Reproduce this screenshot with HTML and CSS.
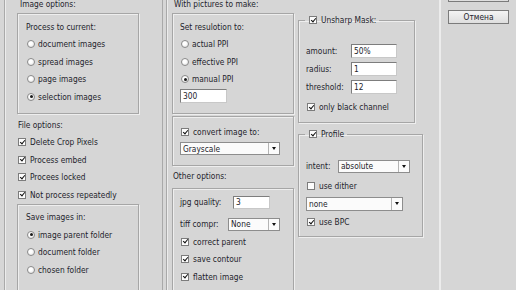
FILE: index.html
```html
<!DOCTYPE html>
<html lang="en">
<head>
    <meta charset="UTF-8">
    <title>Batch Image Options</title>
    <link rel="stylesheet" href="styles.css">
</head>
<body>

<div class="dialog">

    <!-- Image / file options -->
    <div class="col col-image">
        <div class="frame frame-image">
            <div class="head">Image options:</div>
            <div class="box box-top">
                <div class="row">Process to current:</div>
                <div class="row"><span class="radio"></span>document images</div>
                <div class="row"><span class="radio"></span>spread images</div>
                <div class="row"><span class="radio"></span>page images</div>
                <div class="row"><span class="radio on"></span>selection images</div>
            </div>
            <div class="row head2">File options:</div>
            <div class="row flat"><span class="check on"></span>Delete Crop Pixels</div>
            <div class="row flat"><span class="check on"></span>Process embed</div>
            <div class="row flat"><span class="check on"></span>Procees locked</div>
            <div class="row flat"><span class="check on"></span>Not process repeatedly</div>
            <div class="box box-save">
                <div class="row">Save images in:</div>
                <div class="row"><span class="radio on"></span>image parent folder</div>
                <div class="row"><span class="radio"></span>document folder</div>
                <div class="row"><span class="radio"></span>chosen folder</div>
            </div>
        </div>
    </div>

    <!-- Pictures to make -->
    <div class="col col-make">
        <div class="frame frame-make">
            <div class="head">With pictures to make:</div>
            <div class="box box-top">
                <div class="row">Set resulotion to:</div>
                <div class="row"><span class="radio"></span>actual PPI</div>
                <div class="row"><span class="radio"></span>effective PPI</div>
                <div class="row"><span class="radio on"></span>manual PPI</div>
                <div class="field field-ppi">300</div>
            </div>
            <div class="box box-convert">
                <div class="row short"><span class="check on"></span>convert image to:</div>
                <div class="select select-mode">Grayscale<span class="arrow"></span></div>
            </div>
            <div class="row head2 short">Other options:</div>
            <div class="box box-other">
                <div class="row tall"><span class="label">jpg quality:</span><span class="field field-jpg">3</span></div>
                <div class="row tall gap"><span class="label">tiff compr:</span><span class="select select-tiff">None<span class="arrow"></span></span></div>
                <div class="row"><span class="check on"></span>correct parent</div>
                <div class="row"><span class="check on"></span>save contour</div>
                <div class="row"><span class="check on"></span>flatten image</div>
                <div class="row"><span class="check on"></span></div>
            </div>
        </div>
    </div>

    <!-- Sharpen / colour profile -->
    <div class="col col-filter">
        <fieldset class="group group-sharp">
            <legend><span class="check on"></span>Unsharp Mask:</legend>
            <div class="row tall"><span class="label">amount:</span><span class="field field-num">50%</span></div>
            <div class="row tall"><span class="label">radius:</span><span class="field field-num">1</span></div>
            <div class="row tall"><span class="label">threshold:</span><span class="field field-num">12</span></div>
            <div class="row tall push"><span class="check on"></span>only black channel</div>
        </fieldset>
        <fieldset class="group group-profile">
            <legend><span class="check on"></span>Profile</legend>
            <div class="row tall"><span class="label label-intent">intent:</span><span class="select select-intent">absolute<span class="arrow"></span></span></div>
            <div class="row tall push"><span class="check"></span>use dither</div>
            <div class="row tall"><span class="select select-dither">none<span class="arrow"></span></span></div>
            <div class="row tall"><span class="check on"></span>use BPC</div>
        </fieldset>
    </div>

    <div class="divider"></div>

    <div class="col col-buttons">
        <div class="button button-ok"></div>
        <div class="button">Отмена</div>
    </div>

</div>

</body>
</html>
```

FILE: styles.css
```css
/* dialog look */
body {
    margin: 0;
    background-color: #d6d6d6;
    font-family: "DejaVu Sans Condensed", "DejaVu Sans", sans-serif;
    font-stretch: condensed;
    font-size: 8.3px;
    color: #1e1e2c;
    overflow: hidden;
}

.dialog {
    display: flex;
    align-items: flex-start;
    height: 290px;
    overflow: hidden;
}

.col {
    display: flex;
    flex-direction: column;
}

/* outer frames of the two left columns */
.frame {
    margin-top: -2px;
    height: 300px;
    border-left: 1px solid #a9a9a9;
    border-right: 1px solid #a9a9a9;
    box-shadow: inset 1px 0 0 #ececec;
}

.frame-image {
    margin-left: 4px;
    width: 145px;
    padding-left: 12px;
}

.frame-make {
    margin-left: 3px;
    width: 123px;
    padding-left: 5px;
    border-right: none;
}

.head {
    height: 13px;
    line-height: 13px;
    padding-left: 3px;
    margin-bottom: 2px;
}

.frame-make .head {
    padding-left: 2px;
}

.box {
    width: 120px;
    border: 1px solid #a6a6a6;
    box-shadow: inset 1px 1px 0 #eeeeee, 1px 1px 0 #eeeeee;
    padding: 4px 0 6px 8px;
    box-sizing: border-box;
}

.box-top {
    width: 122px;
    height: 101px;
}

.box-save {
    width: 122px;
    height: 90px;
}

.frame-make .box {
    padding-left: 7px;
}

.box-convert {
    width: 122px;
    height: 50px;
    margin-top: 2px;
    padding-top: 7px;
}

.box-other {
    width: 122px;
    height: 120px;
    margin-top: 4px;
    padding-top: 4px;
}

.row {
    display: flex;
    align-items: center;
    height: 17.5px;
    white-space: nowrap;
}

.row.short {
    height: 16px;
}

.row.tall {
    height: 18px;
}

.row.gap {
    margin-top: 4px;
}

.row.push {
    margin-top: 2px;
}

.head2 {
    margin-top: 2px;
    padding-left: 1px;
}

.row.flat {
    padding-left: 1px;
}

/* radio button */
.radio {
    width: 8px;
    height: 8px;
    box-sizing: border-box;
    border: 1px solid #8a8a8a;
    border-radius: 50%;
    background: radial-gradient(circle at 40% 35%, #ffffff 30%, #dcdcdc 100%);
    margin-right: 3px;
    margin-left: 1px;
    position: relative;
}

.radio.on::after {
    content: "";
    position: absolute;
    left: 1.5px;
    top: 1.5px;
    width: 3px;
    height: 3px;
    border-radius: 50%;
    background-color: #1a1a1a;
}

/* check box */
.check {
    width: 8px;
    height: 8px;
    box-sizing: border-box;
    border: 1px solid #7c7c7c;
    background-color: #fdfdfd;
    margin-right: 4px;
    position: relative;
}

.check.on::after {
    content: "";
    position: absolute;
    left: 1.5px;
    top: -0.5px;
    width: 2px;
    height: 4px;
    border-right: 1.6px solid #111;
    border-bottom: 1.6px solid #111;
    transform: rotate(40deg);
}

.frame-make .check,
.col-filter .check {
    margin-left: 1px;
}

/* text fields and drop downs */
.field {
    height: 14px;
    box-sizing: border-box;
    border: 1px solid #7d7d7d;
    border-right-color: #c8c8c8;
    border-bottom-color: #c8c8c8;
    background-color: #ffffff;
    padding-left: 2px;
    line-height: 12px;
}

.field-ppi {
    width: 47px;
    margin-top: 1px;
}

.field-jpg {
    width: 37px;
    height: 13px;
    line-height: 11px;
}

.field-num {
    width: 46px;
}

.label {
    width: 45px;
}

.box-other .label {
    width: 53px;
}

.box-other .row:nth-child(2) .label {
    width: 48px;
}

.select {
    display: flex;
    align-items: center;
    height: 13px;
    box-sizing: border-box;
    border: 1px solid #8d8d8d;
    background-color: #fbfbfb;
    padding-left: 2px;
    position: relative;
}

.select .arrow {
    margin-left: auto;
    width: 10px;
    height: 100%;
    border-left: 1px solid #b4b4b4;
    position: relative;
}

.select .arrow::after {
    content: "";
    position: absolute;
    left: 3px;
    top: 4px;
    border-left: 2.5px solid transparent;
    border-right: 2.5px solid transparent;
    border-top: 3px solid #111;
}

.select-mode {
    width: 100px;
    margin-top: 2px;
}

.select-tiff {
    width: 52px;
}

.label-intent {
    width: 32px;
}

.select-intent {
    width: 72px;
}

.select-dither {
    width: 97px;
    height: 14px;
}

/* right hand group boxes */
.col-filter {
    margin-left: 3px;
}

.group {
    margin: 0;
    border: 1px solid #a6a6a6;
    box-shadow: inset 1px 1px 0 #eeeeee, 1px 1px 0 #eeeeee;
    padding: 16px 0 6px 7px;
    min-width: 0;
}

.group legend {
    display: flex;
    align-items: center;
    height: 12px;
    padding: 0 3px;
    margin-left: -1px;
}

.group-sharp {
    width: 117px;
    box-sizing: border-box;
    margin-top: 14px;
}

.group-profile {
    width: 125px;
    box-sizing: border-box;
    margin-top: 5px;
    padding-top: 17px;
    padding-bottom: 5px;
}

.divider {
    margin-left: 16px;
    width: 2px;
    height: 290px;
    background-color: #ececec;
}

.col-buttons {
    margin-left: 7px;
    gap: 8px;
}

.button {
    width: 61px;
    height: 14px;
    box-sizing: border-box;
    border: 1px solid #7b7b7b;
    background: linear-gradient(#f4f4f4, #dedede);
    text-align: center;
    line-height: 12px;
}

.button-ok {
    margin-top: -12px;
}
```
